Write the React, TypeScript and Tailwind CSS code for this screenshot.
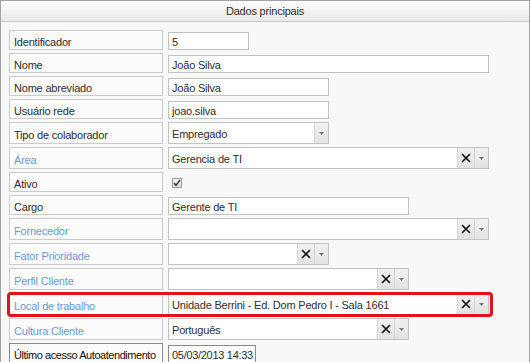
import React from 'react';

type Kind = 'text' | 'select' | 'lookup' | 'check';

interface Field {
  label: string;
  kind: Kind;
  width?: string;
  value?: string;
  link?: boolean;
  tall?: boolean;
  active?: boolean;
  marked?: boolean;
}

const fields: Field[] = [
  { label: 'Identificador', kind: 'text', width: 'w-[81px]', value: '5' },
  { label: 'Nome', kind: 'text', width: 'w-[321px]', value: 'João Silva' },
  { label: 'Nome abreviado', kind: 'text', width: 'w-[161px]', value: 'João Silva' },
  { label: 'Usuário rede', kind: 'text', width: 'w-[161px]', value: 'joao.silva' },
  { label: 'Tipo de colaborador', kind: 'select', width: 'w-[161px]', value: 'Empregado', tall: true },
  { label: 'Área', kind: 'lookup', width: 'w-[321px]', value: 'Gerencia de TI', link: true, tall: true },
  { label: 'Ativo', kind: 'check' },
  { label: 'Cargo', kind: 'text', width: 'w-[241px]', value: 'Gerente de TI' },
  { label: 'Fornecedor', kind: 'lookup', width: 'w-[321px]', value: '', link: true, tall: true },
  { label: 'Fator Prioridade', kind: 'lookup', width: 'w-[161px]', value: '', link: true, tall: true },
  { label: 'Perfil Cliente', kind: 'lookup', width: 'w-[241px]', value: '', link: true, tall: true },
  { label: 'Local de trabalho', kind: 'lookup', width: 'w-[321px]', value: 'Unidade Berrini - Ed. Dom Pedro I - Sala 1661', link: true, tall: true, marked: true },
  { label: 'Cultura Cliente', kind: 'lookup', width: 'w-[241px]', value: 'Português', link: true, tall: true },
  { label: 'Último acesso Autoatendimento', kind: 'text', width: 'w-[88px]', value: '05/03/2013 14:33', active: true },
];

const ClearIcon = () => (
  <svg width="10" height="10" viewBox="0 0 10 10">
    <path d="M1 1 L9 9 M9 1 L1 9" stroke="#111" strokeWidth="1.7" fill="none" />
  </svg>
);

const ArrowIcon = () => (
  <svg width="5" height="3" viewBox="0 0 5 3">
    <path d="M0 0 H5 L2.5 3 Z" fill="#777" />
  </svg>
);

const FieldValue: React.FC<{ field: Field }> = ({ field }) => {
  if (field.kind === 'check') {
    return (
      <div className="flex h-full items-center pl-[4px] pt-[1px]">
        <div className="flex h-[10px] w-[10px] items-center justify-center border border-[#9a9a9a] bg-gradient-to-b from-[#f4f4f4] to-[#dadde2]">
          <svg width="8" height="8" viewBox="0 0 8 8">
            <path d="M1 4 L3 6.3 L7 1" stroke="#333" strokeWidth="1.4" fill="none" />
          </svg>
        </div>
      </div>
    );
  }

  if (field.kind === 'text') {
    return (
      <div
        className={`${field.width} flex h-[18px] items-center whitespace-nowrap border bg-white px-[3px] pt-[2px] ${
          field.active ? 'border-[#8a8a8a] tracking-[-0.3px]' : 'border-[#c2c2c2]'
        }`}
      >
        {field.value}
      </div>
    );
  }

  return (
    <div className={`${field.width} flex h-full border border-[#c2c2c2] bg-white`}>
      <div className="flex flex-1 items-center overflow-hidden whitespace-nowrap px-[3px] pt-[3px]">{field.value}</div>
      {field.kind === 'lookup' && (
        <div className="flex w-[17px] items-center justify-center border-l border-[#d6d6d6] bg-gradient-to-b from-[#f1f1f1] to-[#e2e2e2]">
          <ClearIcon />
        </div>
      )}
      <div className="flex w-[14px] items-center justify-center border-l border-[#d6d6d6] bg-gradient-to-b from-[#f1f1f1] to-[#e2e2e2]">
        <ArrowIcon />
      </div>
    </div>
  );
};

const App: React.FC = () => {
  return (
    <div className="h-[362px] overflow-hidden bg-white" style={{ fontFamily: '"Liberation Sans", Arial, sans-serif' }}>
      <div className="h-[380px] w-[530px] border border-[#a3a3a3] bg-[#f8f8f8] text-[11px] tracking-[-0.2px] text-[#2e2e2e]">
        <div className="flex h-[21px] items-center justify-center border-b border-[#c8c8c8] bg-gradient-to-b from-white to-[#e8e8e8] pt-[1px]">
          Dados principais
        </div>
        <div className="flex flex-col gap-[3px] pl-2 pt-[8px]">
          {fields.map((field) => (
            <div
              key={field.label}
              className={`relative flex items-end gap-[5px] ${field.tall ? 'h-[22px]' : 'h-[20px]'}`}
            >
              <div
                className={`flex h-full w-[154px] items-center whitespace-nowrap border bg-[#fbfbfb] px-[4px] pt-[4px] ${
                  field.active ? 'border-[#8a8a8a] text-[#111] tracking-[-0.45px]' : 'border-[#cbcbcb]'
                } ${field.link ? 'text-[#6b9bd3]' : ''}`}
              >
                {field.label}
              </div>
              <div className="flex h-full items-end">
                <FieldValue field={field} />
              </div>
              {field.marked && (
                <div className="absolute top-[-1px] bottom-[-2px] left-[-2px] w-[486px] rounded-[4px] border-[3px] border-[#e1121b]" />
              )}
            </div>
          ))}
        </div>
      </div>
    </div>
  );
};

export default App;
